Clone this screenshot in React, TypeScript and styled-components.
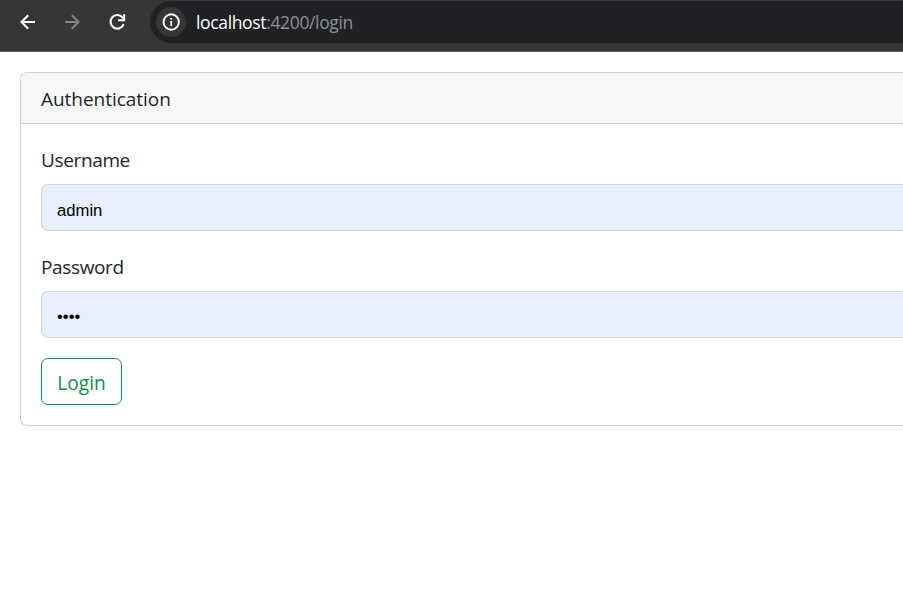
import React from "react";
import styled, { createGlobalStyle } from "styled-components";

const GlobalStyle = createGlobalStyle`
  *, *::before, *::after { box-sizing: border-box; }
  html, body { margin: 0; background: #fff; overflow: hidden; }
  body { font-family: "Open Sans", "Noto Sans", sans-serif; font-weight: 400; color: #212529; }
`;

const Window = styled.div`
  width: 100%;
  height: 593px;
  overflow: hidden;
  background: #fff;
`;

const Toolbar = styled.header`
  height: 52px;
  display: flex;
  align-items: flex-start;
  padding: 1px 0 0 16px;
  background: #363636;
  border-bottom: 1px solid #5d5d5d;
`;

const NavButton = styled.button<{ $muted?: boolean }>`
  width: 24px;
  height: 42px;
  margin-right: 21px;
  padding: 0;
  border: 0;
  background: none;
  display: grid;
  place-items: center;
  color: ${(p) => (p.$muted ? "#858585" : "#fff")};
  svg { display: block; }
`;

const AddressBar = styled.div`
  flex: 1;
  height: 42px;
  margin-left: -1px;
  padding-left: 6px;
  display: flex;
  align-items: center;
  gap: 10px;
  border-radius: 21px 0 0 21px;
  background: #202124;
`;

const SiteInfo = styled.span`
  width: 30px;
  height: 30px;
  border-radius: 50%;
  display: grid;
  place-items: center;
  background: #363636;
  color: #fff;
`;

const Address = styled.span`
  font-size: 17.5px;
  line-height: 24px;
  letter-spacing: -0.35px;
  color: #8e9093;
`;

const Host = styled.span`
  color: #fff;
`;

const Page = styled.main`
  padding: 20px 0 0 20px;
`;

const Card = styled.section`
  height: 354px;
  border: 1px solid #cfcfcf;
  border-right: 0;
  border-radius: 7px 0 0 7px;
  overflow: hidden;
`;

const CardHeader = styled.div`
  height: 51px;
  padding: 11px 20px 0;
  border-bottom: 1px solid #cbcbcb;
  background: #f7f7f7;
  font-size: 19px;
  line-height: 30px;
  letter-spacing: -0.03px;
`;

const Form = styled.form`
  padding: 20px 0 20px 20px;
`;

const Field = styled.div`
  height: 87px;
  margin-bottom: 20px;
`;

const Label = styled.label`
  display: block;
  height: 40px;
  padding-top: 1px;
  font-size: 19px;
  line-height: 30px;
  letter-spacing: -0.36px;
`;

const Input = styled.input`
  display: block;
  width: 100%;
  height: 47px;
  padding: 6px 15px 0;
  border: 1px solid #ced4da;
  border-right: 0;
  border-radius: 7px 0 0 7px;
  outline: 0;
  background: #e8f0fe;
  color: #000;
  font-family: "Liberation Sans", Arial, sans-serif;
  font-size: 16.67px;

  &[type="password"] { padding-top: 4px; }
`;

const LoginButton = styled.button`
  display: block;
  width: 81px;
  height: 47px;
  padding: 2px 0 0;
  border: 1px solid #198754;
  border-radius: 7px;
  background: #fff;
  color: #198754;
  font-family: inherit;
  font-size: 19.2px;
`;

const Back = () => (
  <svg width="20" height="20" viewBox="0 0 20 20" fill="none" stroke="currentColor" strokeWidth="2">
    <path d="M17 10H4M10.2 3.3 3.5 10l6.7 6.7" />
  </svg>
);

const Forward = () => (
  <svg width="20" height="20" viewBox="0 0 20 20" fill="none" stroke="currentColor" strokeWidth="2">
    <path d="M2 10h13M8.8 3.3l6.7 6.7-6.7 6.7" />
  </svg>
);

const Reload = () => (
  <svg width="20" height="20" viewBox="0 0 20 20" fill="none" stroke="currentColor" strokeWidth="2.1">
    <path d="M15.7 12.2A6.8 6.8 0 1 1 14.3 5.2L16 7" />
    <path d="M16.1 2.2v6.1h-6.1" />
  </svg>
);

const Info = () => (
  <svg width="18" height="18" viewBox="0 0 18 18">
    <circle cx="9.2" cy="9" r="7.7" fill="none" stroke="currentColor" strokeWidth="1.9" />
    <path d="M8.3 8h1.8v5H8.3zM8.3 5h1.8v1.8H8.3z" fill="currentColor" />
  </svg>
);

export default function App() {
  return (
    <Window>
      <GlobalStyle />
      <Toolbar>
        <NavButton aria-label="Back"><Back /></NavButton>
        <NavButton aria-label="Forward" $muted><Forward /></NavButton>
        <NavButton aria-label="Reload"><Reload /></NavButton>
        <AddressBar>
          <SiteInfo><Info /></SiteInfo>
          <Address><Host>localhost</Host>:4200/login</Address>
        </AddressBar>
      </Toolbar>
      <Page>
        <Card>
          <CardHeader>Authentication</CardHeader>
          <Form onSubmit={(e) => e.preventDefault()}>
            <Field>
              <Label htmlFor="username">Username</Label>
              <Input id="username" type="text" defaultValue="admin" />
            </Field>
            <Field>
              <Label htmlFor="password">Password</Label>
              <Input id="password" type="password" defaultValue="1234" />
            </Field>
            <LoginButton type="submit">Login</LoginButton>
          </Form>
        </Card>
      </Page>
    </Window>
  );
}
